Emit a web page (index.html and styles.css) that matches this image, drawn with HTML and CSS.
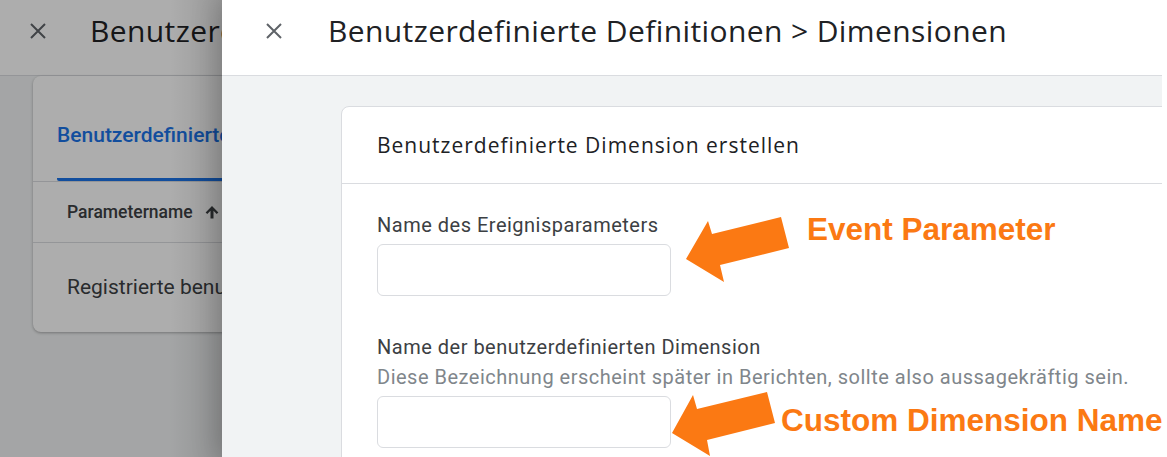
FILE: index.html
```html
<!DOCTYPE html>
<html lang="de">
<head>
  <meta charset="UTF-8">
  <title>Benutzerdefinierte Dimensionen</title>
  <link rel="stylesheet" href="styles.css">
</head>
<body>
  <div class="screen">

    <div class="behind">
      <div class="topbar">
        <svg class="close" viewBox="0 0 20 20"><path d="M3 3 L17 17 M17 3 L3 17"/></svg>
        <span class="title">Benutzerdefinierte Definitionen</span>
      </div>
      <div class="list-card">
        <div class="tabs">
          <div class="tab">Benutzerdefinierte Dimensionen</div>
        </div>
        <div class="thead">Parametername
          <svg class="sort" viewBox="0 0 24 24"><path d="M3.5 12.5l2.2 2.2L10 10.4V20.5h4V10.4l4.3 4.3 2.2-2.2L12 4z"/></svg>
        </div>
        <div class="trow">Registrierte benutzerdefinierte Dimensionen</div>
      </div>
    </div>

    <div class="panel">
      <div class="topbar topbar-main">
        <svg class="close" viewBox="0 0 20 20"><path d="M3 3 L17 17 M17 3 L3 17"/></svg>
        <span class="title">Benutzerdefinierte Definitionen &gt; Dimensionen</span>
      </div>
      <div class="content">
        <div class="form-card">
          <div class="card-head">Benutzerdefinierte Dimension erstellen</div>
          <div class="card-body">
            <div class="field">
              <label class="label" for="param">Name des Ereignisparameters</label>
              <input class="input" id="param" type="text">
            </div>
            <div class="field">
              <label class="label" for="dimname">Name der benutzerdefinierten Dimension</label>
              <div class="hint">Diese Bezeichnung erscheint später in Berichten, sollte also aussagekräftig sein.</div>
              <input class="input" id="dimname" type="text">
            </div>
          </div>
        </div>
      </div>
    </div>

    <!-- annotations drawn on top of the screenshot -->
    <svg class="arrows" viewBox="0 0 1167 457">
      <polygon points="686,259 708,221 712,234 781,217 789,248 720,265 724,282"/>
      <polygon points="672,433 693,395 697,409 767,392 775,423 707,440 710,456"/>
    </svg>
    <div class="note note-1">Event Parameter</div>
    <div class="note note-2">Custom Dimension Name</div>
  </div>
</body>
</html>
```

FILE: styles.css
```css
body {
  margin: 0;
  background: #fff;
  font-family: Roboto, "Liberation Sans", sans-serif;
  color: #202124;
}
.screen {
  position: relative;
  width: 1162px;
  height: 457px;
  display: flex;
  overflow: hidden;
}

/* page behind the side panel */
.behind {
  position: relative;
  width: 222px;
  flex: none;
  background: #f1f3f4;
  overflow: hidden;
}
.behind::after {
  content: "";
  position: absolute;
  inset: 0;
  background: linear-gradient(to right, rgba(0,0,0,0.32) 0, rgba(0,0,0,0.32) 170px, rgba(0,0,0,0.4) 222px);
}
.topbar {
  height: 76px;
  background: #fff;
  border-bottom: 1px solid #dadce0;
  display: flex;
  align-items: center;
  box-sizing: border-box;
  padding-left: 28px;
  white-space: nowrap;
}
.close {
  width: 20px;
  height: 20px;
  flex: none;
  margin-bottom: 14px;
}
.close path {
  stroke: #5f6368;
  stroke-width: 2;
  fill: none;
}
.title {
  font-family: "Open Sans", sans-serif;
  font-size: 30px;
  letter-spacing: 0.4px;
  color: #202124;
  margin-left: 42px;
  margin-bottom: 14px;
}
.list-card {
  margin-left: 33px;
  width: 500px;
  height: 256px;
  background: #fff;
  border-radius: 8px;
  box-shadow: 0 1px 3px rgba(0,0,0,0.3);
  white-space: nowrap;
}
.tabs {
  height: 106px;
  border-bottom: 1px solid #dadce0;
  box-sizing: border-box;
  padding-left: 25px;
  display: flex;
  align-items: flex-end;
}
.tab {
  color: #1a73e8;
  font-weight: 500;
  font-size: 21px;
  padding: 0 0 31px;
  border-bottom: 3px solid #1a73e8;
  border-radius: 2px;
  margin-left: -1px;
}
.thead {
  height: 61px;
  border-bottom: 1px solid #dadce0;
  box-sizing: border-box;
  display: flex;
  align-items: center;
  padding-left: 34px;
  font-size: 17.5px;
  font-weight: 500;
  color: #3c4043;
}
.sort {
  width: 18px;
  height: 18px;
  margin-left: 10px;
  fill: #3c4043;
}
.trow {
  height: 88px;
  display: flex;
  align-items: center;
  padding-left: 34px;
  font-size: 21px;
  color: #3c4043;
}

/* side panel */
.panel {
  position: relative;
  z-index: 1;
  flex: 1;
  background: #f1f3f4;
  box-shadow: -6px 0 24px rgba(0,0,0,0.18);
  overflow: hidden;
}
.topbar-main {
  padding-left: 42px;
}
.topbar-main .title {
  margin-left: 44px;
}
.content {
  padding: 30px 0 0 119px;
}
.form-card {
  width: 900px;
  height: 400px;
  background: #fff;
  border: 1px solid #dadce0;
  border-radius: 8px;
}
.card-head {
  height: 77px;
  border-bottom: 1px solid #dadce0;
  box-sizing: border-box;
  padding-left: 35px;
  display: flex;
  align-items: center;
  font-family: "Open Sans", sans-serif;
  font-size: 21px;
  letter-spacing: 1px;
  color: #202124;
}
.card-body {
  padding: 28px 35px 0;
}
.field {
  display: flex;
  flex-direction: column;
  align-items: flex-start;
  margin-bottom: 38px;
}
.label {
  font-size: 20px;
  letter-spacing: 0.5px;
  color: #3c4043;
  line-height: 26px;
  margin-bottom: 6px;
}
.hint {
  font-size: 20px;
  letter-spacing: 0.5px;
  color: #80868b;
  line-height: 26px;
  margin-top: -2px;
  margin-bottom: 6px;
}
.input {
  width: 294px;
  height: 52px;
  box-sizing: border-box;
  border: 1px solid #dadce0;
  border-radius: 6px;
  margin: 0;
  background: #fff;
}

/* orange annotations */
.arrows {
  position: absolute;
  left: 0;
  top: 0;
  width: 1167px;
  height: 457px;
  z-index: 2;
}
.arrows polygon {
  fill: #fb7913;
}
.note {
  position: absolute;
  z-index: 2;
  font-family: "Liberation Sans", Arial, sans-serif;
  font-weight: bold;
  font-size: 31.5px;
  color: #fb7913;
  white-space: nowrap;
  line-height: 1;
}
.note-1 {
  left: 807px;
  top: 214px;
}
.note-2 {
  left: 781px;
  top: 405px;
}
```
